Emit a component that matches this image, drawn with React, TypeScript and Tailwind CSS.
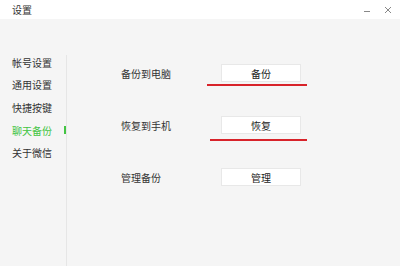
import { ReactNode } from "react";

const FONT = "font-['Microsoft_YaHei','Noto_Sans_CJK_SC',sans-serif]";

export default function App() {
  return (
    <div className={`w-[400px] h-[266px] flex flex-col bg-[#f5f5f5] text-[#333] ${FONT}`}>
      <TitleBar />
      <div className="flex flex-1">
        <Sidebar />
        <div className="mt-[36px] w-px bg-[#e6e6e6]" />
        <Content />
      </div>
    </div>
  );
}

function TitleBar() {
  return (
    <div className="h-[19px] bg-white flex items-center justify-between pl-[12px] pr-[8px]">
      <span className="text-[10px] leading-none">设置</span>
      <div className="flex items-center gap-[14px]">
        <span className="block w-[6px] h-px bg-[#888] mt-[4px]" />
        <svg width="8" height="8" viewBox="0 0 8 8" className="text-[#888]">
          <path d="M1 1L7 7M7 1L1 7" stroke="currentColor" strokeWidth="1" />
        </svg>
      </div>
    </div>
  );
}

function Sidebar() {
  const ITEMS = ["帐号设置", "通用设置", "快捷按键", "聊天备份", "关于微信"];
  return (
    <ul className="w-[66px] pt-[32px] flex flex-col">
      {ITEMS.map((item) => {
        const active = item === "聊天备份";
        return (
          <li
            key={item}
            className={`h-[22.6px] flex items-center justify-between pl-[12px] text-[10px] ${
              active ? "text-[#43c443]" : ""
            }`}
          >
            <span>{item}</span>
            {active && <span className="w-[2px] h-[8px] bg-[#43c443]" />}
          </li>
        );
      })}
    </ul>
  );
}

function Row({ label, button, mark }: { label: string; button: string; mark?: ReactNode }) {
  return (
    <div className="flex items-center h-[18px]">
      <span className="w-[100px] text-[10px]">{label}</span>
      <div className="relative">
        <button className="w-[80px] h-[18px] bg-white border border-[#e8e8e8] text-[10px] text-[#222] flex items-center justify-center">
          {button}
        </button>
        {mark}
      </div>
    </div>
  );
}

function Content() {
  return (
    <div className="flex-1 pl-[54px] pt-[45px] flex flex-col gap-[34px]">
      <Row
        label="备份到电脑"
        button="备份"
        mark={<span className="absolute left-[-14px] top-[20px] w-[100px] h-[2px] bg-[#d8232a]" />}
      />
      <Row
        label="恢复到手机"
        button="恢复"
        mark={<span className="absolute left-[-11px] top-[23px] w-[97px] h-[2px] bg-[#d8232a]" />}
      />
      <Row label="管理备份" button="管理" />
    </div>
  );
}
